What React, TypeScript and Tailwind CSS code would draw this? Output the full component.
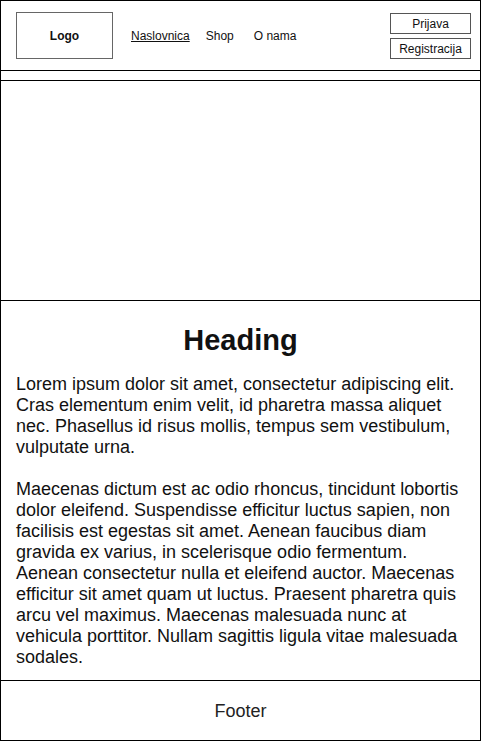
export default function App() {
    return (
        <div
            className="w-[481px] h-[741px] border border-black bg-white flex flex-col text-[#111] overflow-hidden"
            style={{ fontFamily: '"Liberation Sans", Arial, sans-serif' }}
        >
            {/* Header */}
            <header className="h-[70px] shrink-0 border-b border-black flex items-start">
                <div className="ml-[15px] mt-[11px] w-[97px] h-[47px] border border-[#666] flex items-center justify-center text-[12px] font-bold">
                    Logo
                </div>

                <nav className="mt-[26px] ml-[18px] flex items-center text-[12px]">
                    <a className="underline">Naslovnica</a>
                    <a className="ml-[16px]">Shop</a>
                    <a className="ml-[20px]">O nama</a>
                </nav>

                <div className="ml-auto mr-[9px] mt-[12px] flex flex-col gap-[4px]">
                    <button className="w-[81px] h-[21px] border border-[#555] text-[12px] leading-none">
                        Prijava
                    </button>
                    <button className="w-[81px] h-[21px] border border-[#555] text-[12px] leading-none">
                        Registracija
                    </button>
                </div>
            </header>

            {/* Strip */}
            <div className="h-[10px] shrink-0 border-b border-black" />

            {/* Hero */}
            <div className="h-[220px] shrink-0 border-b border-black" />

            {/* Content */}
            <main className="h-[380px] shrink-0 border-b border-black px-[15px] pt-[22px]">
                <h1 className="text-center text-[29px] font-bold leading-[34px]">Heading</h1>
                <p className="mt-[17px] text-[18px] leading-[21px]">
                    Lorem ipsum dolor sit amet, consectetur adipiscing elit. Cras elementum enim velit, id pharetra massa aliquet nec. Phasellus id risus mollis, tempus sem vestibulum, vulputate urna.
                </p>
                <p className="mt-[21px] text-[18px] leading-[21px]">
                    Maecenas dictum est ac odio rhoncus, tincidunt lobortis dolor eleifend. Suspendisse efficitur luctus sapien, non facilisis est egestas sit amet. Aenean faucibus diam gravida ex varius, in scelerisque odio fermentum. Aenean consectetur nulla et eleifend auctor. Maecenas efficitur sit amet quam ut luctus. Praesent pharetra quis arcu vel maximus. Maecenas malesuada nunc at vehicula porttitor. Nullam sagittis ligula vitae malesuada sodales.
                </p>
            </main>

            {/* Footer */}
            <footer className="flex-1 flex items-center justify-center pt-[2px] text-[18px] text-[#222]">
                Footer
            </footer>
        </div>
    );
}
